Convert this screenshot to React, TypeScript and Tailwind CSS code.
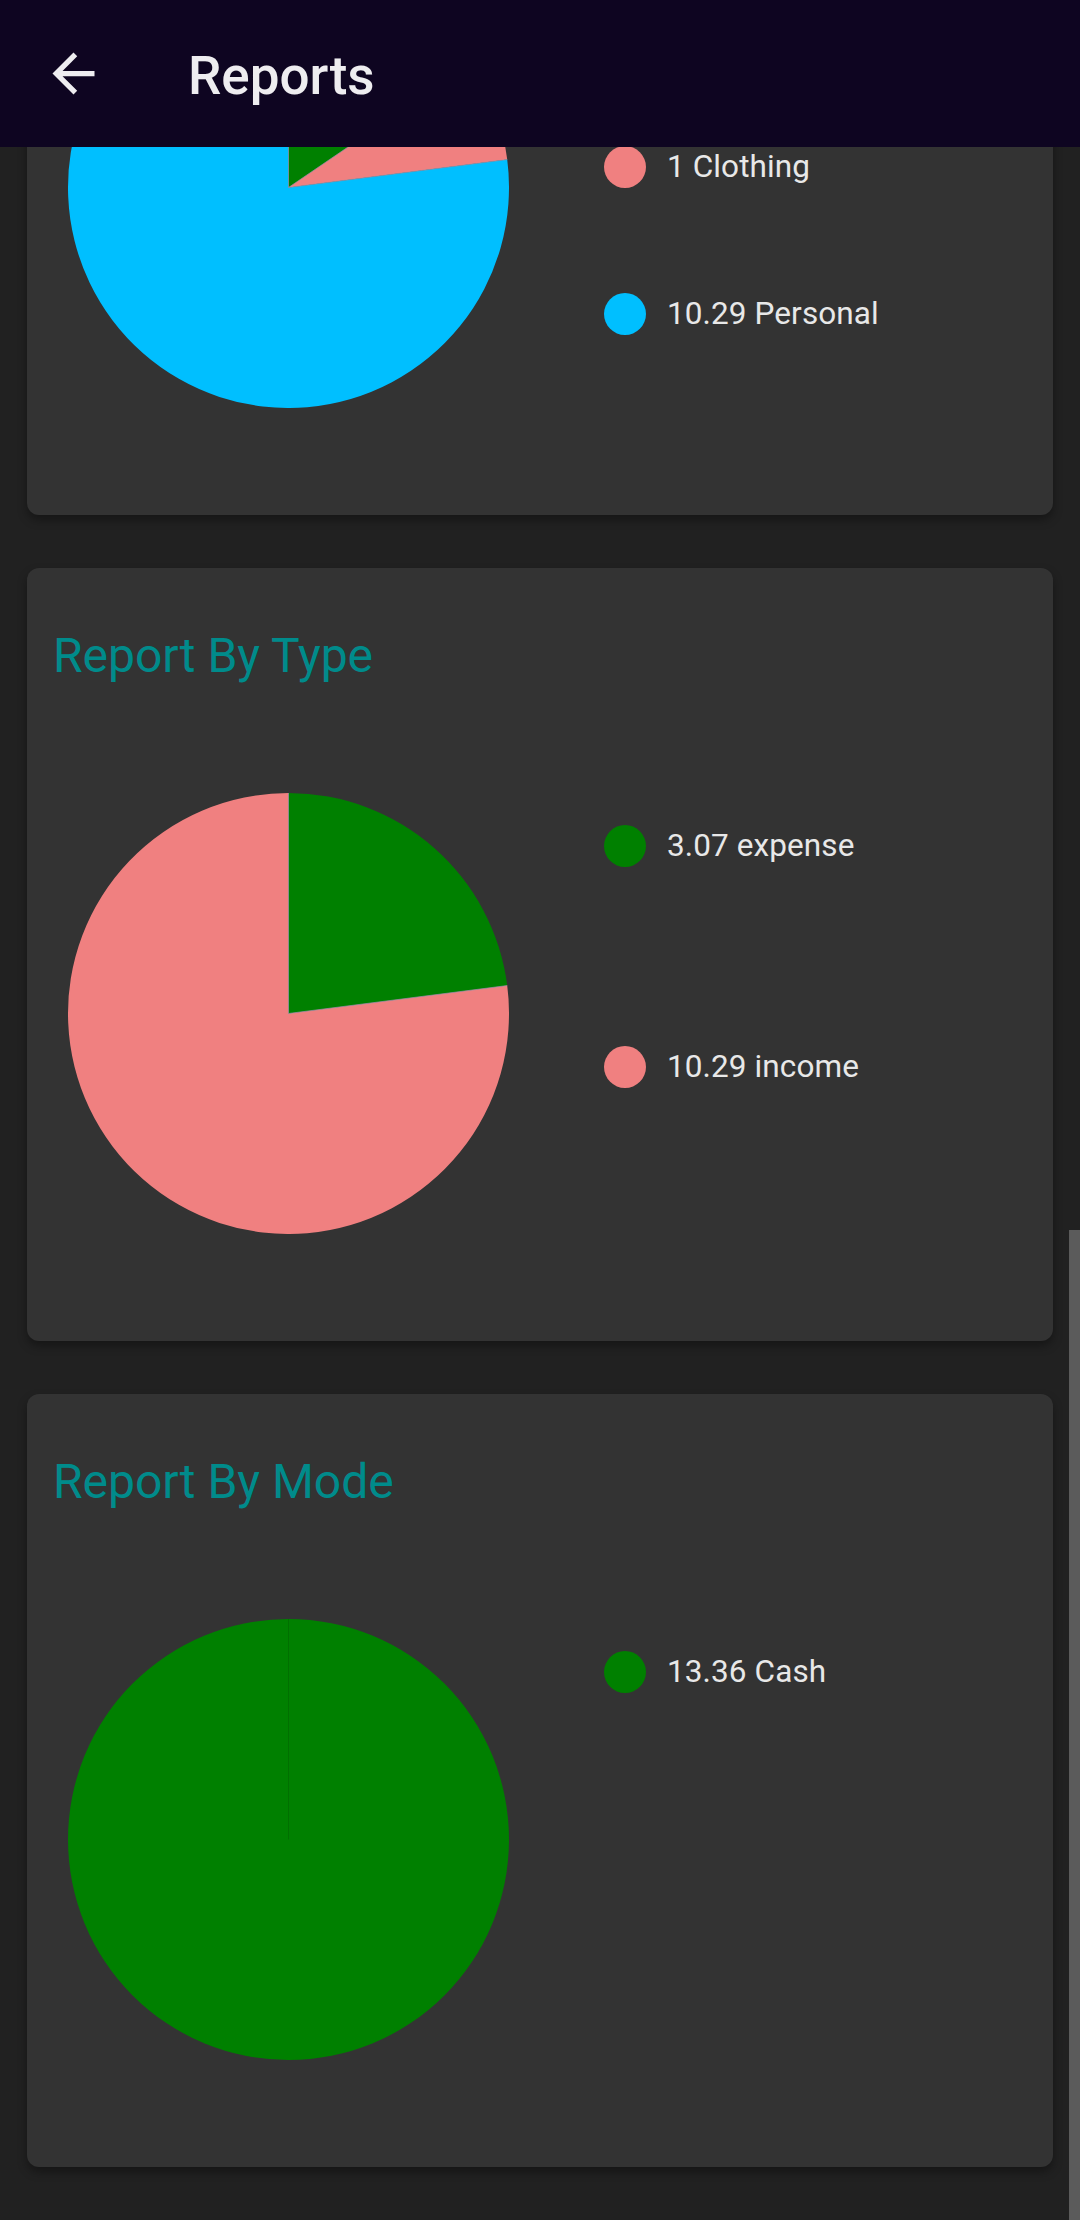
type Slice = {
  value: number;
  label: string;
  color: string;
};

type Report = {
  title: string;
  data: Slice[];
};

const GREEN = "#008000";
const PINK = "#f08080";
const BLUE = "#00bfff";

const reports: Report[] = [
  {
    title: "Report By Category",
    data: [
      { value: 2.07, label: "Food", color: GREEN },
      { value: 1, label: "Clothing", color: PINK },
      { value: 10.29, label: "Personal", color: BLUE },
    ],
  },
  {
    title: "Report By Type",
    data: [
      { value: 3.07, label: "expense", color: GREEN },
      { value: 10.29, label: "income", color: PINK },
    ],
  },
  {
    title: "Report By Mode",
    data: [{ value: 13.36, label: "Cash", color: GREEN }],
  },
];

const SIZE = 441;
const R = SIZE / 2;

const point = (angle: number) => ({
  x: R + R * Math.sin(angle),
  y: R - R * Math.cos(angle),
});

const Pie = ({ data }: { data: Slice[] }) => {
  const total = data.reduce((s, d) => s + d.value, 0);
  let acc = 0;
  const slices = data.map((d) => {
    const a0 = (acc / total) * Math.PI * 2;
    acc += d.value;
    const a1 = (acc / total) * Math.PI * 2;
    return { ...d, a0, a1 };
  });

  return (
    <svg width={SIZE} height={SIZE} viewBox={`0 0 ${SIZE} ${SIZE}`} className="shrink-0">
      {slices.map((s) => {
        if (s.a1 - s.a0 >= Math.PI * 2 - 0.0001) {
          return <circle key={s.label} cx={R} cy={R} r={R} fill={s.color} />;
        }
        const p0 = point(s.a0);
        const p1 = point(s.a1);
        const large = s.a1 - s.a0 > Math.PI ? 1 : 0;
        return (
          <path
            key={s.label}
            d={`M${R} ${R} L${p0.x} ${p0.y} A${R} ${R} 0 ${large} 1 ${p1.x} ${p1.y} Z`}
            fill={s.color}
          />
        );
      })}
      {/* thin seams between slices */}
      {slices.map((s) => {
        const p = point(s.a0);
        return (
          <line
            key={`seam-${s.label}`}
            x1={R}
            y1={R}
            x2={p.x}
            y2={p.y}
            stroke={slices.length === 1 ? "rgba(0,0,0,0.12)" : "rgba(150,150,170,0.7)"}
            strokeWidth={1}
          />
        );
      })}
    </svg>
  );
};

const Legend = ({ data }: { data: Slice[] }) => (
  <div className="flex flex-col h-[441px] ml-[95px] flex-1">
    {data.map((d) => (
      <div key={d.label} className="flex-1 pt-[32px]">
        <div className="flex items-center h-[42px]">
          <span className="w-[42px] h-[42px] rounded-full shrink-0" style={{ backgroundColor: d.color }} />
          <span className="ml-[21px] text-[31.5px] text-[#e8e8e8] leading-none tracking-[0.1px]">
            {d.value} {d.label}
          </span>
        </div>
      </div>
    ))}
  </div>
);

const ReportCard = ({ title, data }: Report) => (
  <div className="bg-[#333333] rounded-[12px] px-[24px] pt-[60px] pb-[107px] shadow-[0_5px_10px_rgba(0,0,0,0.35)]">
    <h2 className="ml-[2px] text-[48px] leading-[55px] text-[#008b8b] font-normal">{title}</h2>
    <div className="flex mt-[110px]">
      <div className="ml-[17px]">
        <Pie data={data} />
      </div>
      <Legend data={data} />
    </div>
  </div>
);

export default function App() {
  return (
    <div className="relative w-[1080px] h-[2220px] overflow-hidden bg-[#212121] font-['Roboto',sans-serif]">
      <div className="flex flex-col gap-[53px] px-[27px] mt-[-258px]">
        {reports.map((r) => (
          <ReportCard key={r.title} {...r} />
        ))}
      </div>

      <header className="absolute top-0 left-0 right-0 h-[147px] bg-[#0e0521] flex items-center">
        <svg width="63" height="63" viewBox="0 0 24 24" className="ml-[42px]" fill="#eeedf0">
          <path d="M20 11H7.83l5.59-5.59L12 4l-8 8 8 8 1.41-1.41L7.83 13H20v-2z" />
        </svg>
        <h1 className="ml-[83px] pt-[5px] text-[53px] font-medium text-[#eeedf0] leading-none">Reports</h1>
      </header>

      <div className="absolute right-0 top-[1230px] bottom-0 w-[11px] bg-[#5b5b5b]" />
    </div>
  );
}
